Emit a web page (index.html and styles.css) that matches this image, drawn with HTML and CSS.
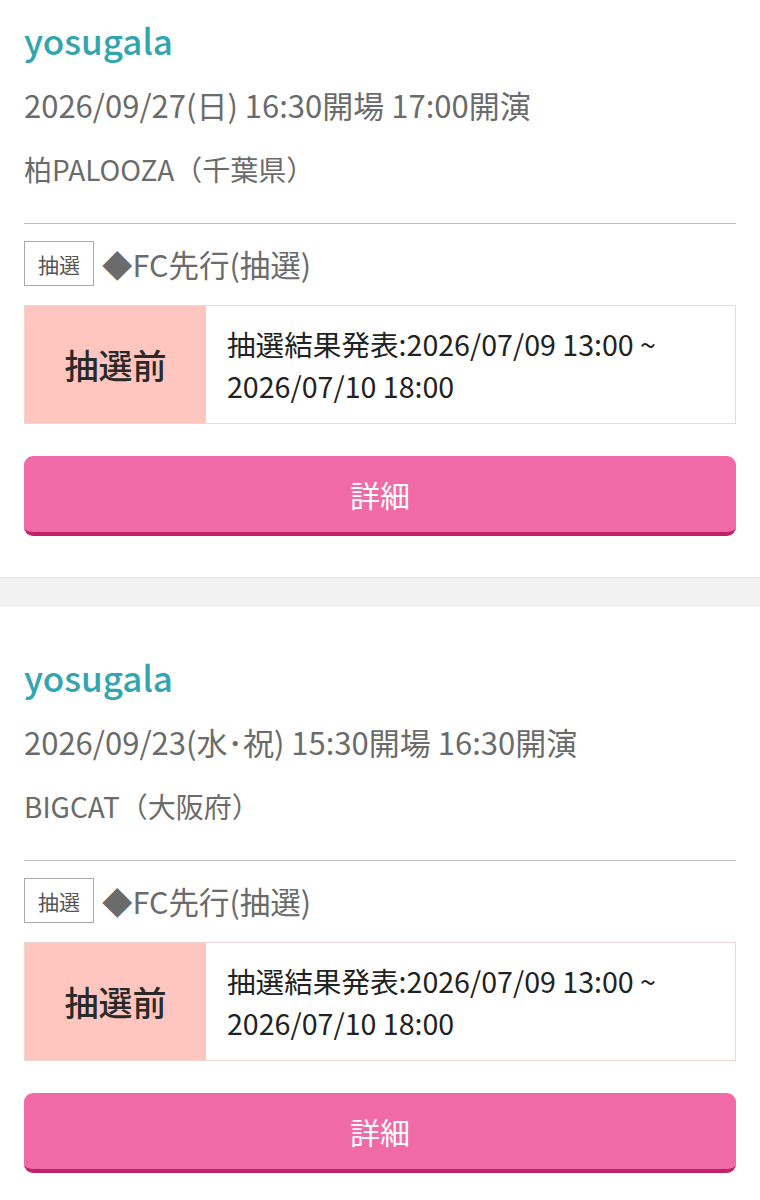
FILE: index.html
```html
<!DOCTYPE html>
<html lang="ja">
<head>
<meta charset="utf-8">
<link rel="stylesheet" href="styles.css">
</head>
<body>
<div class="list">
  <section class="card card-first">
    <h2 class="artist">yosugala</h2>
    <p class="date">2026/09/27(日) 16:30開場 17:00開演</p>
    <p class="venue">柏PALOOZA（千葉県）</p>
    <div class="ticket">
      <div class="type-row">
        <span class="badge">抽選</span>
        <span class="type-name">◆FC先行(抽選)</span>
      </div>
      <div class="status">
        <div class="status-label">抽選前</div>
        <div class="status-text">抽選結果発表:2026/07/09 13:00 ~<br>2026/07/10 18:00</div>
      </div>
      <a class="btn" href="#">詳細</a>
    </div>
  </section>
  <div class="gap"></div>
  <section class="card">
    <h2 class="artist">yosugala</h2>
    <p class="date">2026/09/23(水･祝) 15:30開場 16:30開演</p>
    <p class="venue">BIGCAT（大阪府）</p>
    <div class="ticket">
      <div class="type-row">
        <span class="badge">抽選</span>
        <span class="type-name">◆FC先行(抽選)</span>
      </div>
      <div class="status">
        <div class="status-label">抽選前</div>
        <div class="status-text">抽選結果発表:2026/07/09 13:00 ~<br>2026/07/10 18:00</div>
      </div>
      <a class="btn" href="#">詳細</a>
    </div>
  </section>
</div>
</body>
</html>
```
FILE: styles.css
```css
html, body {
  margin: 0;
  padding: 0;
  background: #fff;
}
body {
  font-family: "Noto Sans CJK JP", "Noto Sans", sans-serif;
  color: #666;
}
.card {
  padding: 38px 24px 41px;
}
.card-first {
  padding-top: 8px;
}
.artist {
  margin: 0;
  font-size: 35px;
  font-weight: 500;
  line-height: 64px;
  color: #33a5b1;
}
.date {
  margin: 0;
  font-size: 31px;
  line-height: 66px;
  color: #6b6b6b;
}
.venue {
  margin: 0;
  font-size: 28px;
  line-height: 62px;
  color: #6b6b6b;
}
.ticket {
  margin-top: 23px;
  border-top: 1px solid #bdbdbd;
  padding-top: 17px;
}
.type-row {
  display: flex;
  align-items: center;
  gap: 8px;
}
.badge {
  box-sizing: border-box;
  width: 70px;
  height: 45px;
  border: 1px solid #a9a9a9;
  display: flex;
  align-items: center;
  justify-content: center;
  font-size: 21px;
  color: #555;
}
.type-name {
  font-size: 30.5px;
  color: #6b6b6b;
}
.status {
  margin-top: 19px;
  display: flex;
  border: 1px solid #f1d5d1;
  height: 119px;
  box-sizing: border-box;
}
.status-label {
  width: 181px;
  background: #ffc6bf;
  display: flex;
  align-items: center;
  justify-content: center;
  font-size: 34px;
  font-weight: 500;
  color: #2a2a2a;
}
.status-text {
  flex: 1;
  display: flex;
  align-items: center;
  padding-left: 21px;
  font-size: 28.6px;
  line-height: 42px;
  color: #222;
}
.btn {
  display: flex;
  align-items: center;
  justify-content: center;
  margin-top: 32px;
  height: 76px;
  border-radius: 9px;
  background: #f06aa7;
  border-bottom: 4px solid #c2206b;
  color: #fff;
  font-size: 30px;
  text-decoration: none;
}
.gap {
  height: 29px;
  background: #f2f2f2;
  border-top: 1px solid #e2e2e2;
}
```
